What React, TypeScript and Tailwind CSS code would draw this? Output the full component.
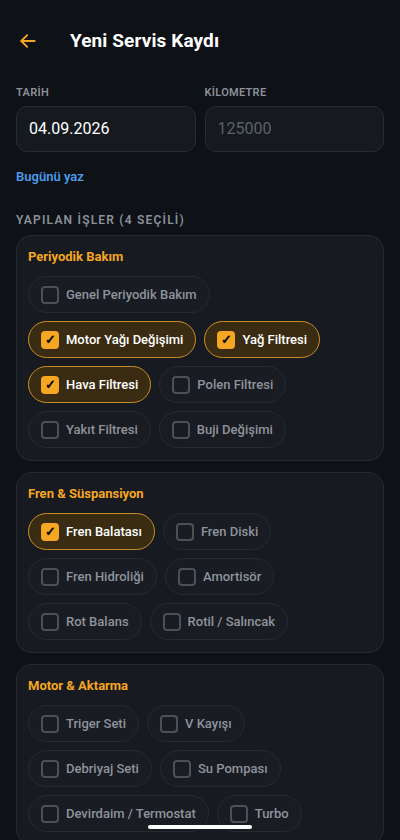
import React from "react";

type Group = { title: string; items: { name: string; checked?: boolean }[] };

const groups: Group[] = [
    {
        title: "Periyodik Bakım",
        items: [
            { name: "Genel Periyodik Bakım" },
            { name: "Motor Yağı Değişimi", checked: true },
            { name: "Yağ Filtresi", checked: true },
            { name: "Hava Filtresi", checked: true },
            { name: "Polen Filtresi" },
            { name: "Yakıt Filtresi" },
            { name: "Buji Değişimi" },
        ],
    },
    {
        title: "Fren & Süspansiyon",
        items: [
            { name: "Fren Balatası", checked: true },
            { name: "Fren Diski" },
            { name: "Fren Hidroliği" },
            { name: "Amortisör" },
            { name: "Rot Balans" },
            { name: "Rotil / Salıncak" },
        ],
    },
    {
        title: "Motor & Aktarma",
        items: [
            { name: "Triger Seti" },
            { name: "V Kayışı" },
            { name: "Debriyaj Seti" },
            { name: "Su Pompası" },
            { name: "Devirdaim / Termostat" },
            { name: "Turbo" },
        ],
    },
];

// rows as laid out in the picture (chips wrap in pairs)
const rows = (items: Group["items"], title: string) => {
    if (title === "Periyodik Bakım") return [[items[0]], [items[1], items[2]], [items[3], items[4]], [items[5], items[6]]];
    const out: Group["items"][] = [];
    for (let i = 0; i < items.length; i += 2) out.push(items.slice(i, i + 2));
    return out;
};

function Chip({ name, checked }: { name: string; checked?: boolean }) {
    return (
        <div
            className={
                checked
                    ? "flex items-center h-[37px] pl-[12px] pr-[12px] rounded-full border border-[#c98d25] bg-[#3a2c12]"
                    : "flex items-center h-[37px] pl-[12px] pr-[12px] rounded-full border border-[#262a31] bg-[#191c22]"
            }
        >
            {checked ? (
                <span className="w-[18px] h-[18px] rounded-[4px] bg-[#f5a623] flex items-center justify-center text-black text-[13px] leading-none font-bold">
                    ✓
                </span>
            ) : (
                <span className="w-[18px] h-[18px] rounded-[4px] border-2 border-[#4b5059]" />
            )}
            <span
                className={
                    checked
                        ? "ml-[7px] text-[13px] font-medium text-white"
                        : "ml-[7px] text-[13px] font-medium text-[#8e939c]"
                }
            >
                {name}
            </span>
        </div>
    );
}

export default function App() {
    return (
        <div
            className="relative w-[400px] h-[840px] overflow-hidden bg-[#0e1116] px-4"
            style={{ fontFamily: "Roboto, 'Noto Sans', sans-serif" }}
        >
            {/* Header */}
            <div className="flex items-center h-[80px] pt-[2px]">
                <svg width="20" height="20" viewBox="0 0 24 24" fill="none" stroke="#f5a623" strokeWidth="2.2" strokeLinecap="round" strokeLinejoin="round" className="ml-[2px]">
                    <path d="M20 12H4" />
                    <path d="M11 5l-7 7 7 7" />
                </svg>
                <h1 className="ml-[32px] text-[19px] font-bold text-white tracking-[0.1px]">Yeni Servis Kaydı</h1>
            </div>

            {/* Date / km */}
            <div className="grid grid-cols-2 gap-[9px] mt-[5px]">
                <div className="flex flex-col">
                    <span className="text-[11px] font-semibold text-[#8b9099] tracking-[0.3px]">TARİH</span>
                    <div className="mt-[4px] h-[46px] rounded-[11px] border border-[#272b32] bg-[#161a1f] flex items-center px-3">
                        <span className="text-[16px] text-white">04.09.2026</span>
                    </div>
                </div>
                <div className="flex flex-col">
                    <span className="text-[11px] font-semibold text-[#8b9099] tracking-[0.3px]">KİLOMETRE</span>
                    <div className="mt-[4px] h-[46px] rounded-[11px] border border-[#272b32] bg-[#161a1f] flex items-center px-3">
                        <span className="text-[16px] text-[#5b6069]">125000</span>
                    </div>
                </div>
            </div>

            <div className="mt-[15px] text-[13px] font-semibold text-[#4c9bec]">Bugünü yaz</div>

            <div className="mt-[25px] text-[12px] font-semibold text-[#8b9099] tracking-[1.2px]">YAPILAN İŞLER (4 SEÇİLİ)</div>

            <div className="mt-[6px] flex flex-col gap-[11px]">
                {groups.map((g) => (
                    <div key={g.title} className="rounded-[15px] border border-[#262a31] bg-[#171a20] px-[11px] pt-[12px] pb-[12px]">
                        <div className="text-[13px] font-bold text-[#f5a623] leading-[18px]">{g.title}</div>
                        <div className="mt-[10px] flex flex-col gap-[8px]">
                            {rows(g.items, g.title).map((r, i) => (
                                <div key={i} className="flex gap-[8px]">
                                    {r.map((it) => (
                                        <Chip key={it.name} name={it.name} checked={it.checked} />
                                    ))}
                                </div>
                            ))}
                        </div>
                    </div>
                ))}
            </div>

            {/* home indicator */}
            <div className="absolute left-[148px] bottom-[11px] w-[104px] h-[4px] rounded-full bg-white" />
        </div>
    );
}
